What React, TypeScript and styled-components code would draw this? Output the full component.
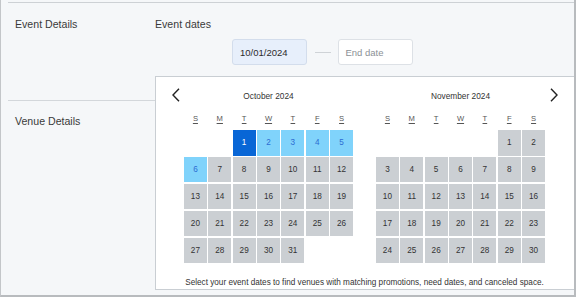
import React from "react";
import styled, { createGlobalStyle } from "styled-components";

type Tone = "empty" | "normal" | "range" | "selected";

interface Month {
  title: string;
  offset: number;
  days: number;
}

const WEEKDAYS = [
  ["S", "Sunday"],
  ["M", "Monday"],
  ["T", "Tuesday"],
  ["W", "Wednesday"],
  ["T", "Thursday"],
  ["F", "Friday"],
  ["S", "Saturday"]
];

const MONTHS: Month[] = [
  { title: "October 2024", offset: 2, days: 31 },
  { title: "November 2024", offset: 5, days: 30 }
];

const GlobalStyle = createGlobalStyle`
  html, body {
    margin: 0;
    padding: 0;
  }
  body {
    font-family: "Liberation Sans", Arial, sans-serif;
    color: #333;
  }
`;

const styles = {
  Frame: styled.div`
    position: relative;
    box-sizing: border-box;
    width: 576px;
    height: 297px;
    overflow: hidden;
    background: #f5f7f9;
    border-left: 1px solid #c3c6c9;
    border-right: 2px solid #b8bbbe;
    border-bottom: 2px solid #b8bbbe;
  `,
  Sheet: styled.div`
    margin: 2px 0 0 7px;
    border-top: 1px solid #cdd1d5;
  `,
  Section: styled.div<{ $first?: boolean }>`
    display: flex;
    height: ${props => (props.$first ? "83px" : "auto")};
    padding: ${props => (props.$first ? "14px" : "13px")} 0 0 7px;
    border-bottom: ${props => (props.$first ? "1px solid #d3d7db" : "none")};
  `,
  SectionLabel: styled.div`
    width: 140px;
    flex: none;
    font-size: 10.6px;
    line-height: 14px;
    color: #3a3a3a;
  `,
  Field: styled.div`
    position: relative;
    flex: 1;
    display: flex;
    flex-direction: column;
  `,
  FieldLabel: styled.div`
    font-size: 10.6px;
    line-height: 14px;
    color: #3a3a3a;
  `,
  InputRow: styled.div`
    display: flex;
    align-items: center;
    margin-top: 8px;
    padding-left: 77px;
  `,
  DateInput: styled.div<{ $filled?: boolean }>`
    box-sizing: border-box;
    width: 75px;
    height: 26px;
    padding: 0 7px;
    display: flex;
    align-items: center;
    border-radius: 3px;
    font-size: 9.5px;
    border: 1px solid ${props => (props.$filled ? "#d3ddec" : "#dde1e6")};
    background: ${props => (props.$filled ? "#e7effb" : "#ffffff")};
    color: ${props => (props.$filled ? "#2b2b2b" : "#8b9096")};
  `,
  Dash: styled.div`
    width: 16px;
    height: 1px;
    margin: 0 7px 0 7.5px;
    background: #cfd3d7;
  `,
  Popup: styled.div`
    position: absolute;
    left: 0;
    top: 59px;
    z-index: 2;
    box-sizing: border-box;
    width: 421px;
    padding-top: 12px;
    background: #ffffff;
    border: 1px solid #c9ced3;
  `,
  Months: styled.div`
    display: flex;
    align-items: flex-start;
  `,
  NavButton: styled.button<{ $side: "prev" | "next" }>`
    flex: none;
    display: flex;
    align-items: center;
    width: ${props => (props.$side === "prev" ? "28px" : "30px")};
    height: 14px;
    margin-top: -1px;
    padding: 0 0 0 ${props => (props.$side === "prev" ? "16px" : "5px")};
    border: 0;
    background: none;
    box-sizing: border-box;
    cursor: pointer;
  `,
  MonthPanel: styled.div`
    width: 169px;
    flex: none;
    & + & {
      margin-left: 23px;
    }
  `,
  MonthTitle: styled.div`
    font-size: 8.3px;
    line-height: 14px;
    text-align: center;
    color: #333;
  `,
  WeekRow: styled.div`
    display: grid;
    grid-template-columns: repeat(7, 1fr);
    column-gap: 1.5px;
    margin-top: 10px;
    font-size: 7.6px;
    line-height: 12px;
    text-align: center;
    color: #555;
  `,
  WeekDay: styled.abbr`
    text-decoration: underline solid;
    text-underline-offset: 1.5px;
  `,
  DayGrid: styled.div`
    display: grid;
    grid-template-columns: repeat(7, 1fr);
    grid-auto-rows: 25.6px;
    column-gap: 1.5px;
    row-gap: 1.3px;
    margin-top: 5px;
  `,
  Day: styled.div<{ $tone: Tone }>`
    display: flex;
    align-items: center;
    justify-content: center;
    font-size: 8.2px;
    background: ${props =>
      props.$tone === "selected"
        ? "#0866d6"
        : props.$tone === "range"
        ? "#80d3fb"
        : props.$tone === "normal"
        ? "#cbcfd3"
        : "transparent"};
    color: ${props =>
      props.$tone === "selected" ? "#ffffff" : props.$tone === "range" ? "#2c6cd2" : "#333"};
  `,
  Note: styled.div`
    margin-top: 14px;
    padding: 0 30px 0 28px;
    font-size: 8.2px;
    line-height: 12px;
    text-align: center;
    color: #333;
  `
};

const Chevron = ({ dir }: { dir: "left" | "right" }) => (
  <svg width="8" height="14" viewBox="0 0 8 14" fill="none">
    <polyline
      points={dir === "left" ? "7,0.7 1,7 7,13.3" : "1,0.7 7,7 1,13.3"}
      stroke="#222"
      strokeWidth="1.4"
      strokeLinejoin="miter"
    />
  </svg>
);

const toneFor = (monthIndex: number, day: number): Tone => {
  if (monthIndex !== 0) return "normal";
  if (day === 1) return "selected";
  if (day <= 6) return "range";
  return "normal";
};

const MonthView = ({ month, index }: { month: Month; index: number }) => {
  const blanks = Array.from({ length: month.offset });
  const days = Array.from({ length: month.days }, (_, i) => i + 1);

  return (
    <styles.MonthPanel>
      <styles.MonthTitle>{month.title}</styles.MonthTitle>
      <styles.WeekRow>
        {WEEKDAYS.map(([letter, name], i) => (
          <div key={i}>
            <styles.WeekDay title={name}>{letter}</styles.WeekDay>
          </div>
        ))}
      </styles.WeekRow>
      <styles.DayGrid>
        {blanks.map((_, i) => (
          <styles.Day key={"b" + i} $tone="empty" />
        ))}
        {days.map(day => (
          <styles.Day key={day} $tone={toneFor(index, day)}>
            {day}
          </styles.Day>
        ))}
      </styles.DayGrid>
    </styles.MonthPanel>
  );
};

export default function App() {
  return (
    <>
      <GlobalStyle />
      <styles.Frame>
        <styles.Sheet>
          <styles.Section $first>
            <styles.SectionLabel>Event Details</styles.SectionLabel>
            <styles.Field>
              <styles.FieldLabel>Event dates</styles.FieldLabel>
              <styles.InputRow>
                <styles.DateInput $filled>10/01/2024</styles.DateInput>
                <styles.Dash />
                <styles.DateInput>End date</styles.DateInput>
              </styles.InputRow>
              <styles.Popup>
                <styles.Months>
                  <styles.NavButton $side="prev" aria-label="Previous month">
                    <Chevron dir="left" />
                  </styles.NavButton>
                  {MONTHS.map((m, i) => (
                    <MonthView key={m.title} month={m} index={i} />
                  ))}
                  <styles.NavButton $side="next" aria-label="Next month">
                    <Chevron dir="right" />
                  </styles.NavButton>
                </styles.Months>
                <styles.Note>
                  Select your event dates to find venues with matching promotions, need dates, and canceled space.
                </styles.Note>
              </styles.Popup>
            </styles.Field>
          </styles.Section>
          <styles.Section>
            <styles.SectionLabel>Venue Details</styles.SectionLabel>
          </styles.Section>
        </styles.Sheet>
      </styles.Frame>
    </>
  );
}
